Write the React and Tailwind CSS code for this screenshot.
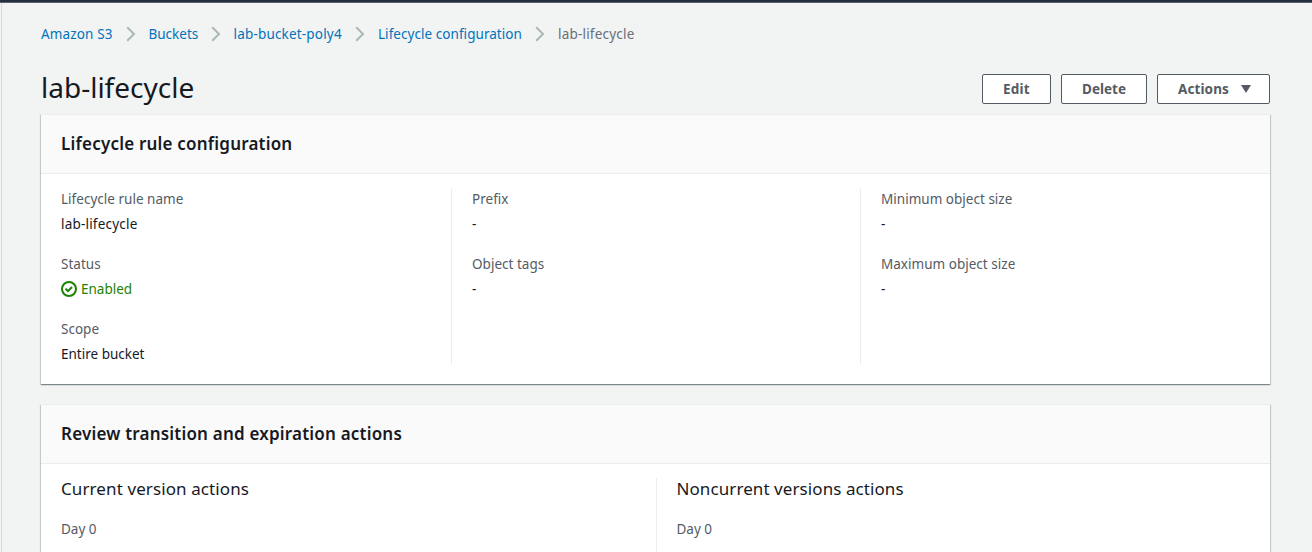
const card =
  "bg-white shadow-[0_1px_1px_0_rgba(0,28,36,0.3),1px_1px_1px_0_rgba(0,28,36,0.15),-1px_1px_1px_0_rgba(0,28,36,0.15)] border-t border-[#eaeded]";

function Chevron() {
  return (
    <svg className="mr-[13px] ml-[12.5px] h-4 w-[10px] shrink-0" viewBox="0 0 10 16" fill="none" stroke="#aab7b8" strokeWidth="2">
      <path d="M1.2 1.2 8 8 1.2 14.8" />
    </svg>
  );
}

function Crumb({ children, className }) {
  return (
    <a className={`shrink-0 whitespace-nowrap text-[#0073bb] ${className}`} href="#">
      {children}
    </a>
  );
}

function Button({ children, className }) {
  return (
    <button
      className={`flex h-[30px] items-center rounded-[2px] border border-[#545b64] bg-white pl-5 text-left text-[13.5px] font-bold text-[#545b64] ${className}`}
    >
      {children}
    </button>
  );
}

function Field({ label, children }) {
  return (
    <div className="h-[65px]">
      <div className="h-[25px] tracking-[0.02px] text-[#545b64]">{label}</div>
      <div className="flex h-5 items-center">{children}</div>
    </div>
  );
}

function Enabled() {
  return (
    <span className="flex items-center gap-1 text-[#1d8102]">
      <svg className="h-4 w-4" viewBox="0 0 16 16" fill="none" stroke="currentColor" strokeWidth="2">
        <circle cx="8" cy="8" r="7" />
        <path d="m4.5 7.8 2.5 2.4 4-4.2" />
      </svg>
      Enabled
    </span>
  );
}

function CardHeader({ children }) {
  return (
    <div className="h-[59px] border-b border-[#eaeded] bg-[#fafafa] px-5 pt-[17px] text-[17px] leading-6 font-semibold tracking-[0.2px]">
      {children}
    </div>
  );
}

export default function App() {
  return (
    <div className="h-[552px] overflow-hidden border-t-2 border-[#232f3e] bg-[#f2f3f3] font-['Noto_Sans',sans-serif] text-[13.5px] leading-5 text-[#16191f]">
      <div className="h-px bg-[#59616c]" />
      <div className="ml-px h-full border-l border-[#d5dbdb] pt-[21px] pr-[42px] pl-[39px]">
        <nav className="flex h-5 items-center">
          <Crumb className="w-[72px] tracking-[0.15px]">Amazon S3</Crumb>
          <Chevron />
          <Crumb className="w-[49.5px]">Buckets</Crumb>
          <Chevron />
          <Crumb className="w-[109px] tracking-[0.18px]">lab-bucket-poly4</Crumb>
          <Chevron />
          <Crumb className="w-[144.5px] tracking-[0.05px]">Lifecycle configuration</Crumb>
          <Chevron />
          <span className="tracking-[0.2px] text-[#687078]">lab-lifecycle</span>
        </nav>
        <header className="mt-[23px] flex h-[44px] items-start justify-between">
          <h1 className="mt-[2px] text-[28px] leading-[36px]">lab-lifecycle</h1>
          <div className="mt-[7px] flex gap-[10px]">
            <Button className="w-[69px] tracking-[0.2px]">Edit</Button>
            <Button className="w-[86px]">Delete</Button>
            <Button className="w-[113px]">
              <span className="w-[63px] tracking-[0.1px]">Actions</span>
              <svg className="h-2 w-[10px]" viewBox="0 0 10 8" fill="#545b64">
                <path d="M0 0h10L5 8z" />
              </svg>
            </Button>
          </div>
        </header>
        <section className={`mt-[3px] h-[270px] ${card}`}>
          <CardHeader>Lifecycle rule configuration</CardHeader>
          <div className="mt-[15px] flex h-[175px] px-5">
            <div className="w-[390px]">
              <Field label="Lifecycle rule name">
                <span className="tracking-[0.2px]">lab-lifecycle</span>
              </Field>
              <Field label="Status"><Enabled /></Field>
              <Field label="Scope">Entire bucket</Field>
            </div>
            <div className="w-[409px] border-l border-[#eaeded] pl-5">
              <Field label="Prefix">-</Field>
              <Field label="Object tags">-</Field>
            </div>
            <div className="border-l border-[#eaeded] pl-5">
              <Field label="Minimum object size">-</Field>
              <Field label="Maximum object size">-</Field>
            </div>
          </div>
        </section>
        <section className={`mt-5 h-[270px] ${card}`}>
          <CardHeader>Review transition and expiration actions</CardHeader>
          <div className="mt-[14px] flex h-[175px] px-5">
            <div className="w-[595px]">
              <h3 className="text-[17px] leading-[22px] tracking-[0.1px]">Current version actions</h3>
              <div className="mt-[19px] text-[#545b64]">Day 0</div>
            </div>
            <div className="border-l border-[#eaeded] pl-[19.5px]">
              <h3 className="text-[17px] leading-[22px] tracking-[0.08px]">Noncurrent versions actions</h3>
              <div className="mt-[19px] text-[#545b64]">Day 0</div>
            </div>
          </div>
        </section>
      </div>
    </div>
  );
}
